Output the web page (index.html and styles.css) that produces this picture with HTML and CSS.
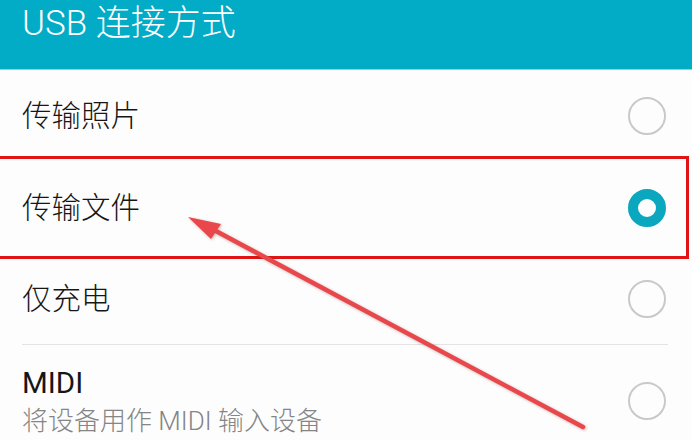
FILE: index.html
```html
<!DOCTYPE html>
<html lang="zh-CN">
<head>
<meta charset="utf-8">
<title>USB 连接方式</title>
<link rel="stylesheet" href="styles.css">
</head>
<body>
<div class="screen">
  <header class="appbar">USB 连接方式</header>
  <ul class="options">
    <li class="option">
      <span class="label">传输照片</span>
      <span class="radio"></span>
    </li>
    <li class="option">
      <span class="label">传输文件</span>
      <span class="radio checked"></span>
    </li>
    <li class="option divided">
      <span class="label">仅充电</span>
      <span class="radio"></span>
    </li>
    <li class="option tall">
      <span class="texts">
        <span class="label latin">MIDI</span>
        <span class="sub">将设备用作 MIDI 输入设备</span>
      </span>
      <span class="radio"></span>
    </li>
  </ul>
  <div class="highlight"></div>
  <svg class="arrow" width="692" height="440" viewBox="0 0 692 440">
    <line x1="583" y1="427" x2="214" y2="230" stroke="#e8474c" stroke-width="4.5" stroke-linecap="round"/>
    <polygon points="188,217 221,224 211,239" fill="#e8474c"/>
  </svg>
</div>
</body>
</html>
```
FILE: styles.css
```css
html, body {
  margin: 0;
  padding: 0;
}
body {
  width: 692px;
  height: 440px;
  overflow: hidden;
  background: #fdfdfd;
  font-family: Roboto, "Noto Sans CJK SC", sans-serif;
}
.screen {
  position: relative;
  width: 692px;
  height: 440px;
  overflow: hidden;
}
.appbar {
  height: 70px;
  box-sizing: border-box;
  background: #02abc6;
  color: #ffffff;
  font-size: 35px;
  font-weight: 300;
  line-height: 36px;
  padding: 6px 0 0 22px;
  border-bottom: 1px solid #7fd6e4;
}
.options {
  list-style: none;
  margin: 0;
  padding: 0;
}
.option {
  height: 92px;
  box-sizing: border-box;
  display: flex;
  align-items: center;
  justify-content: space-between;
  padding: 0 26px 0 22px;
  color: #161616;
}
.option:nth-child(2) {
  height: 91px;
}
.option.divided {
  position: relative;
}
.option.divided::after {
  content: "";
  position: absolute;
  left: 22px;
  right: 24px;
  bottom: 0;
  height: 1px;
  background: #e4e4e4;
}
.option.tall {
  height: 112px;
}
.label {
  font-size: 29.5px;
  font-weight: 300;
  line-height: 36px;
}
.label.latin {
  font-weight: 400;
}
.texts {
  display: flex;
  flex-direction: column;
}
.sub {
  font-size: 26px;
  font-weight: 300;
  line-height: 34px;
  margin-top: 3px;
  color: #858585;
}
.radio {
  width: 38px;
  height: 38px;
  box-sizing: border-box;
  border: 2px solid #c9c9c9;
  border-radius: 50%;
  flex: none;
}
.radio.checked {
  border: 10px solid #0aa7be;
}
.highlight {
  position: absolute;
  left: -3px;
  top: 156px;
  width: 692px;
  height: 103px;
  box-sizing: border-box;
  border: 3.5px solid #e01414;
}
.arrow {
  position: absolute;
  left: 0;
  top: 0;
  filter: drop-shadow(1px 1px 1.5px rgba(120, 40, 40, 0.35));
}
```
